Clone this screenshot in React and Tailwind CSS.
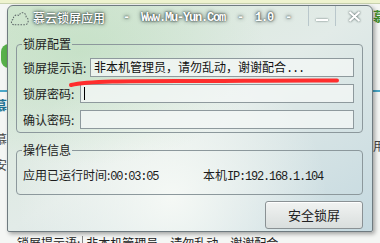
import React from 'react';

const CJK = "font-['Noto_Sans_CJK_SC','Noto_Sans',sans-serif]";
const MONO = "font-['Liberation_Mono','Noto_Sans_CJK_SC',monospace] text-[12px] tracking-[-1.2px]";

const CloudIcon = () => (
  <svg width="19" height="18" viewBox="0 0 20 18" className="shrink-0">
    <path
      d="M4 16 C1 16 0.5 11 3.5 10.5 C3 6.5 7.5 4.5 9.5 6.5 C11 2 17 2.5 17 8 C20 8.5 20 16 16 16 Z"
      fill="none"
      stroke="#5b6466"
      strokeWidth="1.1"
      strokeDasharray="1.6 1.4"
    />
  </svg>
);

const GroupBox = ({ title, className = '', children }) => (
  <fieldset className={`border border-[#8c989c] rounded-[4px] pl-[6px] pr-[8px] ${className}`}>
    <legend className={`${CJK} -ml-px px-px text-[12px] leading-[14px] text-[#1c1c1c]`}>{title}</legend>
    {children}
  </fieldset>
);

const Field = ({ label, labelWidth, children }) => (
  <div className="flex items-center">
    <span className={`${CJK} text-[12px] leading-[14px] text-[#1c1c1c] shrink-0 ${labelWidth}`}>{label}</span>
    <div className="flex-1 h-[19px] border border-[#8e999d] bg-[#f2f6f5]/80 flex items-center pl-[3px]">
      {children}
    </div>
  </div>
);

export default function App() {
  return (
    <div className="relative w-[380px] h-[243px] overflow-hidden bg-[#f4f6f4]">
      {/* desktop behind the window */}
      <div className="absolute left-0 top-0 w-full h-[4px] bg-[#eef3cf] border-b border-[#c9d3b0]" />
      <div className="absolute left-[1px] top-[44px] w-[8px] h-[24px] rounded-l-full bg-[#57b04a]" />
      <div className="absolute left-0 top-[90px] w-[8px] h-[2px] bg-[#4aa8c8]" />
      <div className="absolute right-0 top-[90px] w-[8px] h-[2px] bg-[#4aa8c8]" />
      <div className={`absolute left-[-6px] top-[95px] ${CJK} text-[13px] font-bold text-[#1b6f8f]`}>慕</div>
      <div className={`absolute left-[-5px] top-[130px] ${CJK} text-[12px] text-[#444]`}>慕</div>
      <div className={`absolute left-[-5px] top-[156px] ${CJK} text-[12px] text-[#444]`}>安</div>
      <div className={`absolute right-[-6px] top-[6px] ${CJK} text-[13px] font-bold text-[#3f8f2c]`}>慕</div>
      <div className={`absolute right-[-5px] top-[137px] ${CJK} text-[12px] text-[#444]`}>用</div>
      <div className={`absolute left-[17px] top-[236px] flex items-start ${CJK} text-[12px] leading-[14px] text-[#222]`}>
        <span>锁屏提示语:</span>
        <span className="ml-[2px] border-l border-[#888] pl-[3px]">非本机管理员，请勿乱动，谢谢配合</span>
      </div>

      {/* window */}
      <div className="absolute left-[7px] top-[5px] w-[366px] h-[227px] flex flex-col border border-[#6f7b80] rounded-t-[6px] rounded-b-[2px] overflow-hidden bg-gradient-to-br from-[#d7e8d6] via-[#e2ebe8] to-[#c5d9e0] shadow-[2px_2px_4px_rgba(0,0,0,0.35)]">
        <div className="pointer-events-none absolute inset-0 bg-[radial-gradient(ellipse_at_45%_85%,rgba(250,252,248,0.85),transparent_55%)]" />
        <div className="pointer-events-none absolute inset-0 bg-[radial-gradient(ellipse_at_20%_20%,rgba(160,210,160,0.35),transparent_45%)]" />

        {/* title bar */}
        <div className="relative flex items-center h-[20px] shrink-0">
          <div className="ml-[2px] mt-[4px]">
            <CloudIcon />
          </div>
          <div className="ml-[4px] mt-[4px] flex items-center text-white [text-shadow:0_0_2px_rgba(30,45,45,1),0_0_4px_rgba(30,45,45,0.9)]">
            <span className={`${CJK} text-[12px] leading-[14px] font-medium`}>慕云锁屏应用</span>
            <span className={`${MONO} font-bold whitespace-pre`}>{'   -  Www.Mu-Yun.Com  -  1.0  -'}</span>
          </div>
          <div className="ml-auto flex h-full">
            <div className="w-[27px] h-full border-l border-[#b9c7cb] flex items-center justify-center">
              <div className="w-[12px] h-[2px] mt-[7px] bg-white shadow-[0_0_2px_rgba(40,60,60,0.8)]" />
            </div>
            <div className="w-[37px] h-full border-l border-[#b9c7cb] flex items-center justify-center">
              <svg width="13" height="11" viewBox="0 0 13 11" className="mt-[1px] drop-shadow-[0_0_1px_rgba(40,60,60,0.9)]">
                <path d="M1.5 1 L11.5 10 M11.5 1 L1.5 10" stroke="white" strokeWidth="2.2" />
              </svg>
            </div>
          </div>
        </div>

        {/* content */}
        <div className="relative flex-1 flex flex-col pl-[8px] pr-[9px]">
          <GroupBox title="锁屏配置" className="mt-[11px] pt-[7px] pb-[3px]">
            <div className="flex flex-col gap-[7px]">
              <Field label="锁屏提示语:" labelWidth="w-[67px]">
                <span className={`${CJK} text-[12px] leading-[14px] text-[#111]`}>
                  非本机管理员，请勿乱动，谢谢配合<span className={MONO}>...</span>
                </span>
              </Field>
              <Field label="锁屏密码:" labelWidth="w-[57px]">
                <div className="w-px h-[13px] bg-black" />
              </Field>
              <Field label="确认密码:" labelWidth="w-[57px]" />
            </div>
          </GroupBox>

          <GroupBox title="操作信息" className="mt-[10px] pt-[11px] pb-[10px]">
            <div className={`flex items-center ${CJK} text-[12px] leading-[14px] text-[#1c1c1c]`}>
              <span className="w-[180px] shrink-0">
                应用已运行时间:<span className={MONO}>00:03:05</span>
              </span>
              <span>
                本机<span className={MONO}>IP:192.168.1.104</span>
              </span>
            </div>
          </GroupBox>

          <div className="flex justify-end mt-[6px]">
            <button className={`w-[98px] h-[28px] rounded-[3px] border border-[#8a9194] bg-gradient-to-b from-[#f1f3f2] to-[#d9dedd] ${CJK} text-[13px] text-[#222] shadow-[inset_0_1px_0_rgba(255,255,255,0.9)]`}>
              安全锁屏
            </button>
          </div>
        </div>

        {/* red hand-drawn underline */}
        <svg className="pointer-events-none absolute left-0 top-0" width="366" height="100">
          <path
            d="M63 79 C80 75 120 75 170 75 S290 74 329 74.5"
            fill="none"
            stroke="#ff2d2d"
            strokeWidth="4"
            strokeLinecap="round"
          />
        </svg>
      </div>
    </div>
  );
}
